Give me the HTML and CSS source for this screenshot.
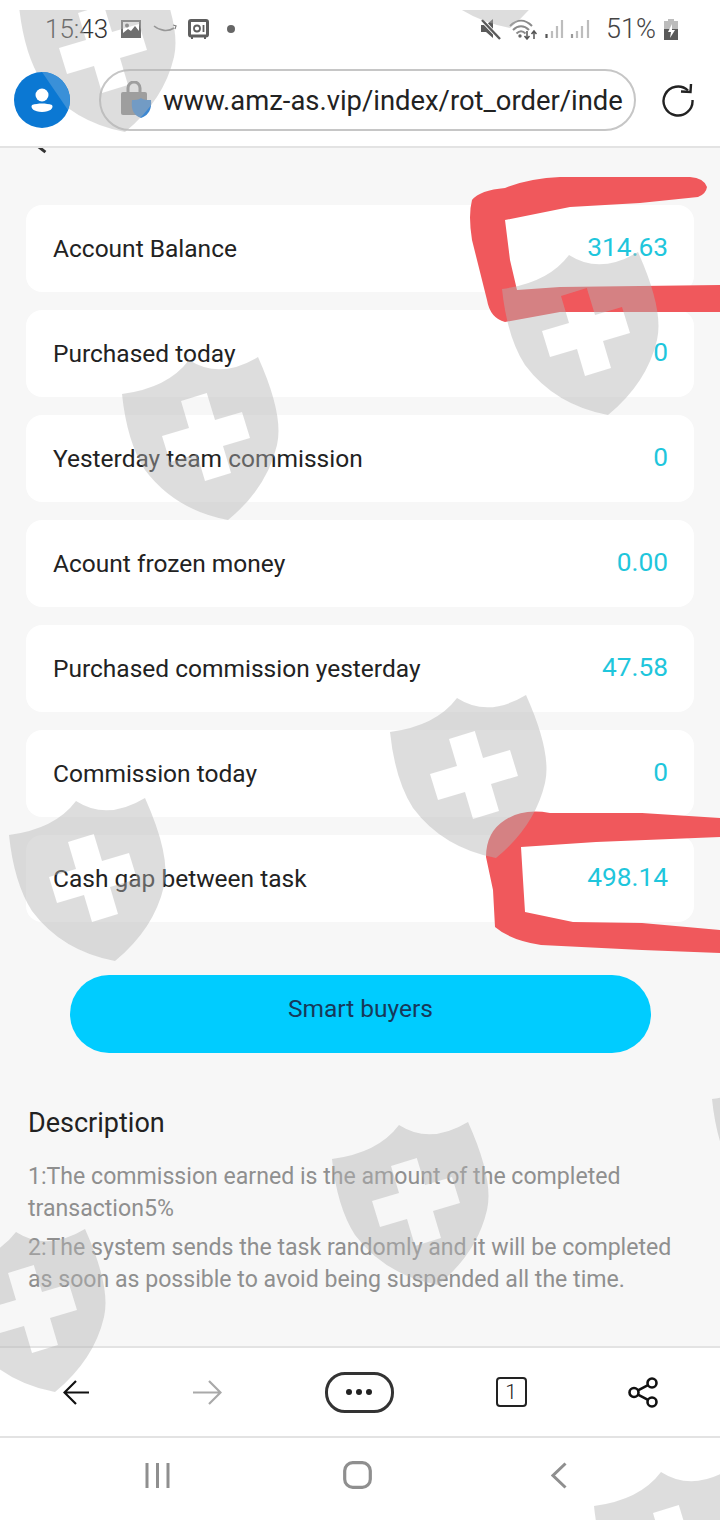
FILE: index.html
```html
<!DOCTYPE html>
<html lang="en">
<head>
    <meta charset="UTF-8">
    <meta name="viewport" content="width=device-width, initial-scale=1.0">
    <title>Task</title>
    <link rel="stylesheet" href="styles.css">
</head>
<body>
    <div class="phone">
        <div class="status-bar">
            <span class="clock">15:43</span>
            <svg class="st-image" width="22" height="20" viewBox="0 0 22 20"><rect x="1" y="1" width="20" height="18" fill="#6f6f6f"/><rect x="3" y="3" width="16" height="11" fill="#fff"/><circle cx="7" cy="6.500" r="2" fill="#6f6f6f"/><path d="M3 14l5-4 3 2 4-5 4 5v4H3z" fill="#6f6f6f"/></svg>
            <svg class="st-smile" width="24" height="12" viewBox="0 0 24 12"><path d="M1 3c6 5 14 6 20 2" fill="none" stroke="#808080" stroke-width="1.6"/><path d="M20 2l3 1-1 3" fill="none" stroke="#808080" stroke-width="1.2"/></svg>
            <svg class="st-safe" width="21" height="21" viewBox="0 0 21 21"><rect x="1.500" y="1.500" width="18" height="15.500" rx="1.500" fill="#fff" stroke="#5e5e5e" stroke-width="3"/><circle cx="9" cy="9.500" r="3" fill="none" stroke="#5e5e5e" stroke-width="1.8"/><path d="M15.500 6v7" stroke="#5e5e5e" stroke-width="1.8"/><path d="M4 18v2M17 18v2" stroke="#5e5e5e" stroke-width="2"/></svg>
            <span class="st-dot"></span>
            <span class="st-spacer"></span>
            <svg class="st-mute" width="21" height="22" viewBox="0 0 21 22"><path d="M1 7h5l7-6v19l-7-6H1z" fill="#5a5a5a"/><path d="M2 2l18 19" stroke="#fff" stroke-width="4"/><path d="M2 2l18 19" stroke="#5a5a5a" stroke-width="2.400"/></svg>
            <svg class="st-wifi" width="28" height="22" viewBox="0 0 28 22"><path d="M1 8c7-7 15-7 22 0M4 12c5-5 11-5 16 0M7.500 15.500c3-3 6-3 9 0" fill="none" stroke="#8a8a8a" stroke-width="2"/><circle cx="11" cy="18" r="1.700" fill="#666"/><path d="M18 13v7M15.500 18l2.500 3 2.500-3" fill="none" stroke="#555" stroke-width="1.500"/><path d="M25 21v-7M22.500 16l2.500-3 2.500 3" fill="none" stroke="#555" stroke-width="1.500"/></svg>
            <svg class="st-signal" width="45" height="22" viewBox="0 0 45 22"><path d="M7 20v-7M12 20V8M17 20V2M32 20v-7M37 20V8M43 20V2" stroke="#bdbdbd" stroke-width="2.200"/><path d="M1.500 20v-4" stroke="#555" stroke-width="2.200"/><path d="M27 20v-4" stroke="#999" stroke-width="2.200"/></svg>
            <span class="battery-text">51%</span>
            <svg class="st-battery" width="14" height="21" viewBox="0 0 14 21"><path d="M4 0h6v2h4v19H0V2h4z" fill="#bcbcbc"/><path d="M0 10h14v11H0z" fill="#5a5a5a"/><path d="M8 5l-4 8h3l-1 6 5-8H8z" fill="#fff"/></svg>
        </div>

        <div class="url-bar">
            <div class="avatar">
                <svg width="56" height="56" viewBox="0 0 56 56"><circle cx="28" cy="28" r="28" fill="#0b78d3"/><path d="M28 0a28 28 0 0 1 26 38z" fill="#3a90d8"/><circle cx="28" cy="23" r="6.500" fill="#fff"/><path d="M18 33c6-2 14-2 20 0 2 3-2 7-10 7s-12-4-10-7z" fill="#fff"/></svg>
            </div>
            <div class="url-pill">
                <svg class="lock" width="32" height="38" viewBox="0 0 32 38"><path d="M8 12V7a6 6 0 0 1 12 0v5" fill="none" stroke="#8c8c8c" stroke-width="3"/><rect x="1" y="11" width="26" height="23" rx="2" fill="#8c8c8c"/><path d="M21 17c3 2 5 2 10 2 1 9-2 15-10 18-8-3-10-9-9-18 4 0 6 0 9-2z" fill="#3c87d2"/></svg>
                <span class="url-text">www.amz-as.vip/index/rot_order/inde</span>
            </div>
            <svg class="reload" width="34" height="34" viewBox="0 0 34 34"><path d="M27 7.500A14.500 14.500 0 1 0 31.500 17" fill="none" stroke="#222" stroke-width="2.400"/><path d="M20 8.500l9.500.5.500-8" fill="none" stroke="#222" stroke-width="2.400"/></svg>
        </div>

        <main class="page">
            <span class="back-tip"></span>
            <div class="rows">
                <div class="row"><span>Account Balance</span><span class="val">314.63</span></div>
                <div class="row"><span>Purchased today</span><span class="val">0</span></div>
                <div class="row"><span>Yesterday team commission</span><span class="val">0</span></div>
                <div class="row"><span>Acount frozen money</span><span class="val">0.00</span></div>
                <div class="row"><span>Purchased commission yesterday</span><span class="val">47.58</span></div>
                <div class="row"><span>Commission today</span><span class="val">0</span></div>
                <div class="row"><span>Cash gap between task</span><span class="val">498.14</span></div>
            </div>
            <button class="buy-btn">Smart buyers</button>
            <div class="desc">
                <h3>Description</h3>
                <p>1:The commission earned is the amount of the completed transaction5%</p>
                <p>2:The system sends the task randomly and it will be completed as soon as possible to avoid being suspended all the time.</p>
            </div>
        </main>

        <div class="toolbar">
            <svg width="26" height="25" viewBox="0 0 26 25"><path d="M26 12.500H1.500M13 1L1.500 12.500 13 24" fill="none" stroke="#111" stroke-width="2.200"/></svg>
            <svg width="29" height="25" viewBox="0 0 29 25"><path d="M0 12.500h27.500M16 1l11.500 11.500L16 24" fill="none" stroke="#a9a9a9" stroke-width="2.200"/></svg>
            <div class="more"><i></i><i></i><i></i></div>
            <div class="tabs">1</div>
            <svg width="30" height="31" viewBox="0 0 30 31"><g fill="none" stroke="#111" stroke-width="2.600"><circle cx="6" cy="15.500" r="4.500"/><circle cx="24" cy="6" r="4.500"/><circle cx="24" cy="25" r="4.500"/><path d="M10 13.300l10-5.200M10 17.700l10 5.200"/></g></svg>
        </div>

        <div class="navbar">
            <svg width="25" height="27" viewBox="0 0 25 27"><path d="M2 1v25M12.500 1v25M23 1v25" stroke="#8f8f8f" stroke-width="3"/></svg>
            <svg width="29" height="28" viewBox="0 0 29 28"><rect x="1.700" y="1.700" width="25.600" height="24.600" rx="8" fill="none" stroke="#8f8f8f" stroke-width="3.200"/></svg>
            <svg width="16" height="27" viewBox="0 0 16 27"><path d="M14.500 1.500L2 13.500l12.500 12" fill="none" stroke="#8f8f8f" stroke-width="3"/></svg>
        </div>

        <svg class="overlay" width="720" height="1510" viewBox="0 10 720 1510">
            <defs>
                <path id="shield" fill-rule="evenodd" d="M-78-46Q-32-52-11-80Q20-60 58-83Q84-25 77 5Q67 48 28 80Q-25 70-55 30Q-73 2-78-46ZM-19-39L6.800-47L15-20L42-28L50-2L23 6L31 33L5 41L-3 14L-30 22L-38-4L-11-12Z"/>
            </defs>
            <path class="scribble" d="M707 187Q704 178 690 177L560 177Q530 178 505 188Q480 190 472 200Q468 215 472 240L487 300Q490 318 505 322L560 312L720 312L720 285L640 286L560 287L517 290L510 260L505 220L570 207L640 203L698 197Q706 194 707 187Z"/>
            <path class="scribble" d="M720 818L642 813L550 813Q523 808 505 820Q486 832 486 857L493 890L495 927Q510 940 541 945L642 950L720 953L720 930L642 923L573 922L525 912L523 880L521 847L596 842L720 837Z"/>
            <g class="marks">
                <use href="#shield" x="97" y="52"/>
                <use href="#shield" x="482" y="-52"/>
                <use href="#shield" x="580" y="335"/>
                <use href="#shield" x="200" y="440"/>
                <use href="#shield" x="468" y="778"/>
                <use href="#shield" x="87" y="881"/>
                <use href="#shield" x="790" y="1145"/>
                <use href="#shield" x="410" y="1205"/>
                <use href="#shield" x="27" y="1312"/>
                <use href="#shield" x="672" y="1552"/>
            </g>
        </svg>
    </div>
</body>
</html>
```

FILE: styles.css
```css
* {
    box-sizing: border-box;
}
body {
    margin: 0;
    font-family: Roboto, "Liberation Sans", sans-serif;
    background: #fff;
}
.phone {
    position: relative;
    width: 720px;
    height: 1520px;
    overflow: hidden;
    display: flex;
    flex-direction: column;
}

/* status bar */
.status-bar {
    height: 56px;
    flex: none;
    display: flex;
    align-items: center;
    padding: 2px 42px 0 45px;
    color: #444;
}
.clock {
    font-size: 26px;
    font-weight: 300;
    color: #333;
    width: 75px;
}
.st-smile {
    margin-left: 11px;
}
.st-safe {
    margin-left: 11px;
}
.st-dot {
    width: 8px;
    height: 8px;
    border-radius: 50%;
    background: #666;
    margin-left: 18px;
}
.st-spacer {
    flex: 1;
}
.st-wifi {
    margin-left: 8px;
}
.st-signal {
    margin-left: 8px;
}
.battery-text {
    font-size: 27px;
    margin-left: 16px;
    font-weight: 300;
}
.st-battery {
    margin-left: 8px;
}

/* url bar */
.url-bar {
    height: 92px;
    flex: none;
    display: flex;
    align-items: center;
    padding: 0 25px 2px 14px;
    border-bottom: 2px solid #e3e3e3;
}
.avatar {
    position: relative;
    z-index: 2;
    width: 56px;
    height: 56px;
    flex: none;
}
.avatar svg {
    display: block;
}
.url-pill {
    width: 537px;
    height: 62px;
    margin-left: 29px;
    padding: 0 12px 0 19px;
    display: flex;
    align-items: center;
    border: 2px solid #c6c6c6;
    border-radius: 31px;
}
.lock {
    flex: none;
}
.url-text {
    font-size: 27.4px;
    color: #222;
    margin: 2px 0 0 11px;
    white-space: nowrap;
}
.reload {
    margin-left: auto;
}

/* page content */
.page {
    position: relative;
    flex: 1;
    background: #f7f7f7;
    padding: 57px 26px 0;
    overflow: hidden;
}
.back-tip {
    position: absolute;
    left: 32px;
    top: -2px;
    width: 15px;
    height: 3px;
    background: #333;
    transform: rotate(38deg);
}
.rows {
    display: flex;
    flex-direction: column;
    gap: 18px;
}
.row {
    height: 87px;
    background: #fff;
    border-radius: 16px;
    display: flex;
    align-items: center;
    justify-content: space-between;
    padding: 0 26px 0 27px;
    font-size: 24.5px;
    color: #222;
}
.val {
    color: #1fc6dc;
    font-size: 26.3px;
    padding-bottom: 4px;
}
.buy-btn {
    display: block;
    width: 581px;
    height: 78px;
    margin: 53px 0 0 44px;
    padding: 0 0 11px;
    border: none;
    border-radius: 39px;
    background: #00ccff;
    color: #17395a;
    font-family: inherit;
    font-size: 24.5px;
}
.desc {
    margin: 54px 0 0 2px;
    color: #8f8f8f;
    font-size: 23.1px;
    line-height: 32px;
}
.desc h3 {
    margin: 0 0 22px;
    font-size: 27px;
    font-weight: 400;
    color: #222;
}
.desc p {
    margin: 0 0 7px;
}

/* bottom bars */
.toolbar {
    height: 92px;
    flex: none;
    display: grid;
    grid-template-columns: 152px 110px 194px 110px 154px;
    align-items: center;
    justify-items: center;
    border-top: 2px solid #e3e3e3;
    border-bottom: 2px solid #e3e3e3;
    background: #fff;
}
.more {
    width: 69px;
    height: 41px;
    border: 3px solid #333;
    border-radius: 20px;
    display: flex;
    align-items: center;
    justify-content: center;
    gap: 4px;
}
.more i {
    width: 6px;
    height: 6px;
    border-radius: 50%;
    background: #222;
}
.tabs {
    width: 31px;
    height: 30px;
    border: 2.5px solid #222;
    border-radius: 4px;
    display: flex;
    align-items: center;
    justify-content: center;
    font-size: 21px;
    font-weight: 300;
    color: #222;
}
.navbar {
    height: 82px;
    flex: none;
    padding-bottom: 8px;
    display: grid;
    grid-template-columns: 314px 86px 318px;
    align-items: center;
    justify-items: center;
    background: #fff;
}

/* watermark and marker drawn over the screenshot */
.overlay {
    position: absolute;
    left: 0;
    top: 10px;
    z-index: 1;
    pointer-events: none;
}
.scribble {
    fill: #f0585c;
}
.marks {
    fill: rgba(180, 180, 180, 0.45);
}
```
